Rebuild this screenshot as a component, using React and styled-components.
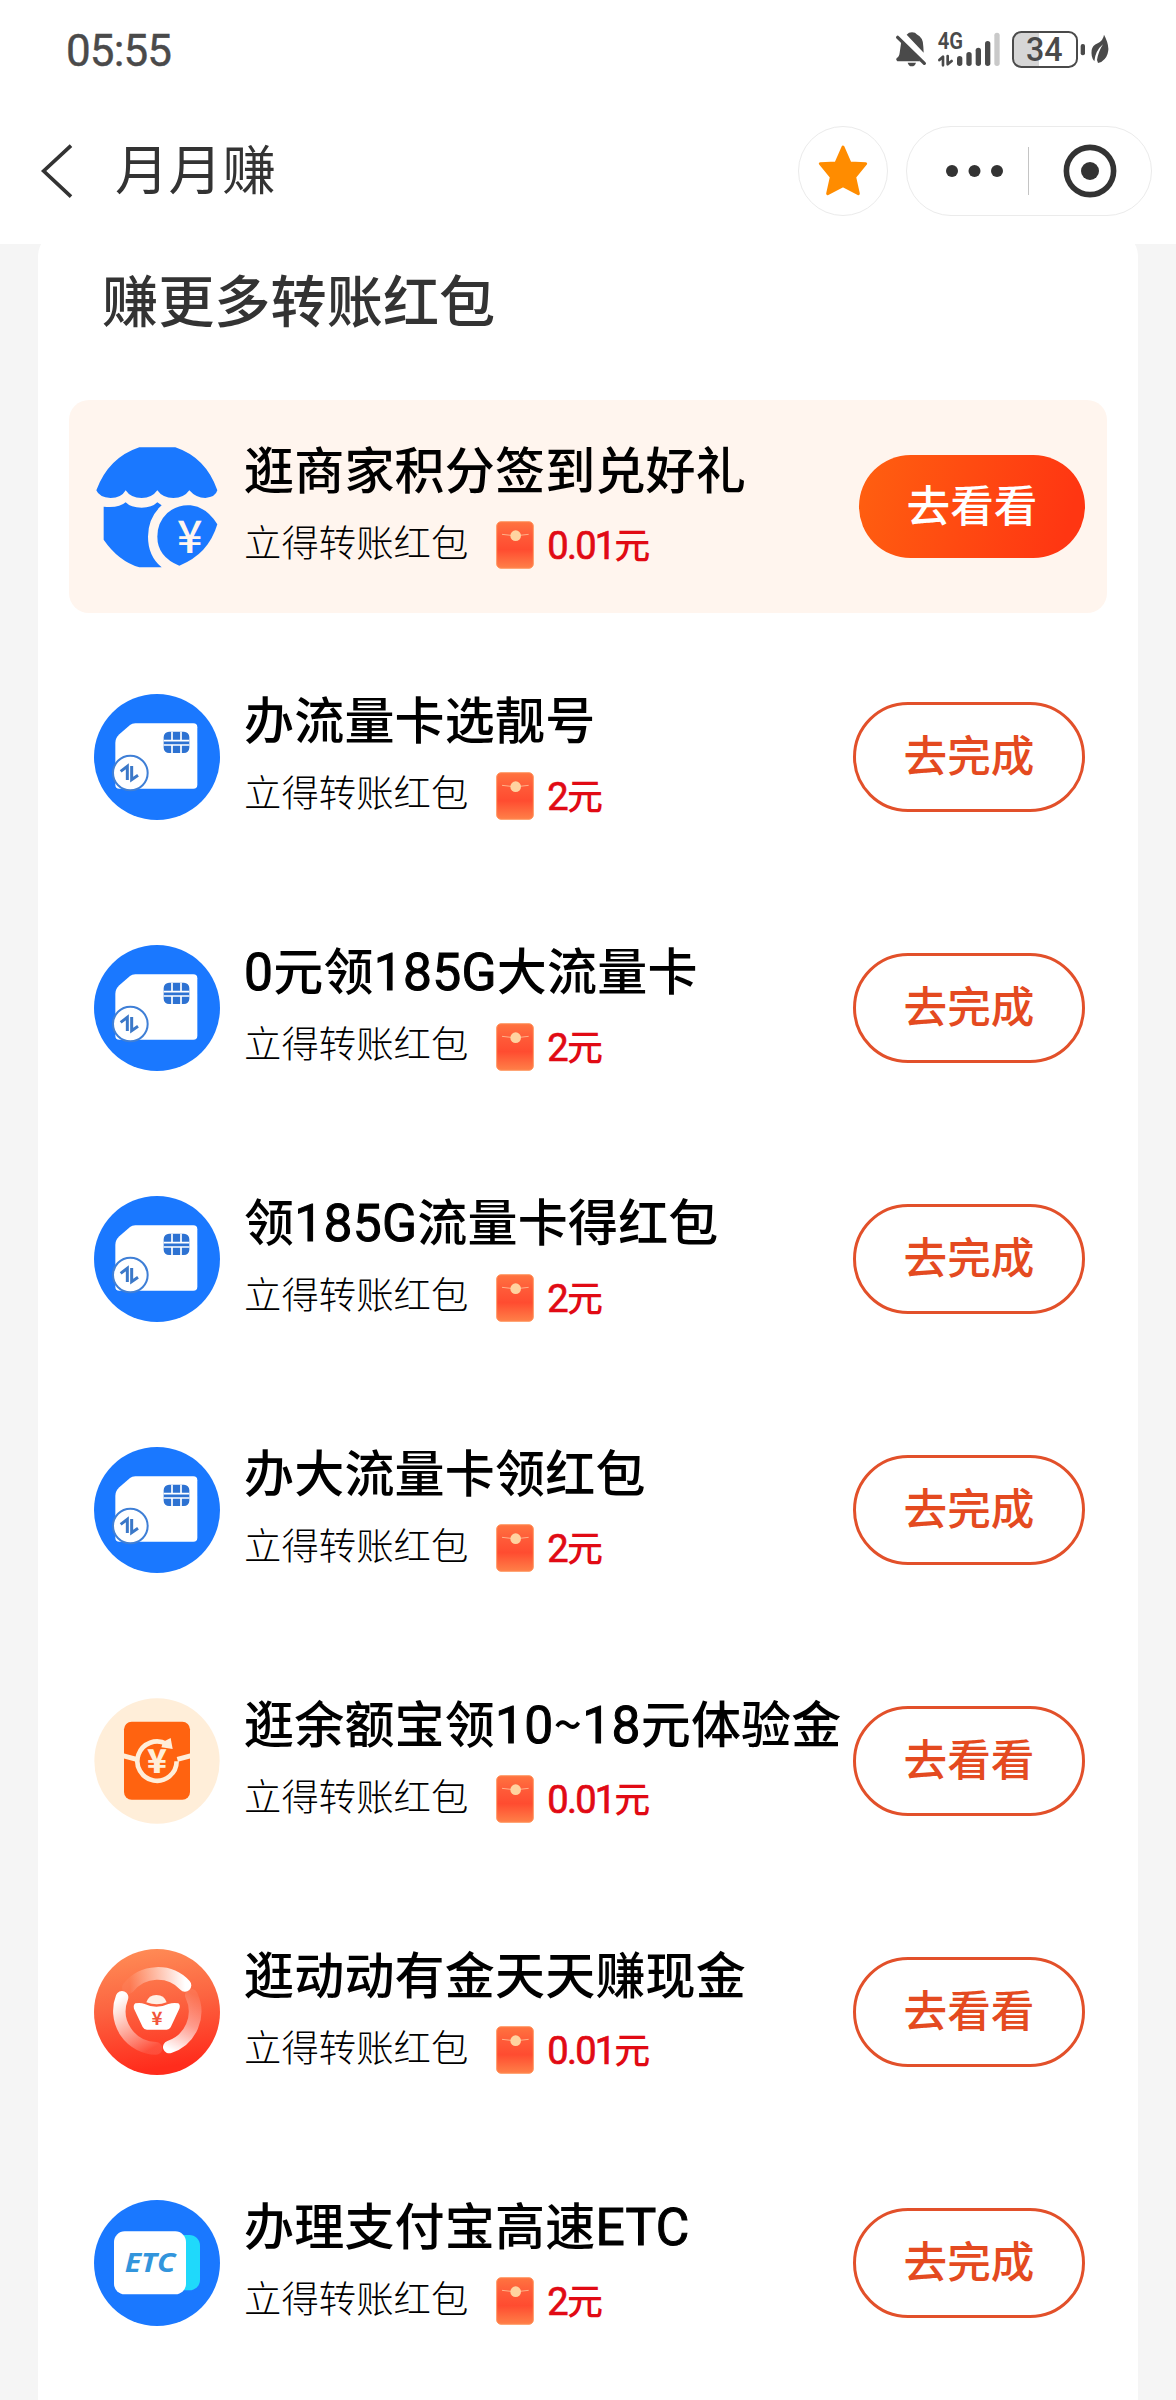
import React from 'react';
import styled, { createGlobalStyle, css } from 'styled-components';

const GlobalStyle = createGlobalStyle`
  * {
    box-sizing: border-box;
  }

  body {
    margin: 0;
    background: #f5f5f5;
    font-family: 'Noto Sans CJK SC', 'Noto Sans', sans-serif;
  }
`;

const Screen = styled.div`
  display: flex;
  flex-direction: column;
  width: 1176px;
  height: 2400px;
  overflow: hidden;
  background: #f5f5f5;
`;

const Header = styled.header`
  flex: none;
  height: 244px;
  background: #fff;
`;

const StatusBar = styled.div`
  display: flex;
  align-items: center;
  justify-content: space-between;
  height: 100px;
  padding: 0 66px;
`;

const Clock = styled.span`
  padding-top: 2px;
  color: #4a4a4a;
  font-family: Roboto, 'Liberation Sans', sans-serif;
  font-size: 44px;
  letter-spacing: -0.9px;
  -webkit-text-stroke: 0.4px currentColor;
`;

const StatusIcons = styled.div`
  display: flex;
  align-items: center;
  gap: 10px;

  svg {
    display: block;
    overflow: visible;
  }

  svg:last-child {
    margin-left: -6px;
  }
`;

const NavBar = styled.nav`
  display: flex;
  align-items: center;
  height: 142px;
  padding: 0 24px 0 38px;

  svg {
    display: block;
  }
`;

const NavTitle = styled.h1`
  flex: 1;
  margin: 0 0 8px 41px;
  color: #333;
  font-size: 53.6px;
  font-weight: 400;
  line-height: 60px;
`;

const StarButton = styled.div`
  display: flex;
  align-items: center;
  justify-content: center;
  width: 90px;
  height: 90px;
  margin-right: 18px;
  border: 1px solid #ebebeb;
  border-radius: 50%;
`;

const Capsule = styled.div`
  display: flex;
  align-items: center;
  width: 246px;
  height: 90px;
  padding-left: 39px;
  border: 1px solid #ebebeb;
  border-radius: 45px;
`;

const Divider = styled.span`
  width: 1px;
  height: 48px;
  margin: 0 34px 0 25px;
  background: #c4c4c4;
`;

const Scroller = styled.main`
  flex: 1;
  overflow: hidden;
`;

const Card = styled.section`
  height: 2240px;
  margin: -12px 38px 0;
  padding: 36px 31px 0;
  border-radius: 24px;
  background: #fff;
`;

const CardTitle = styled.h2`
  margin: 0 0 72px 33px;
  color: #333;
  font-size: 56.2px;
  font-weight: 500;
  line-height: 60px;
`;

const TaskList = styled.div`
  display: flex;
  flex-direction: column;
  gap: 37.86px;
`;

const TaskRow = styled.article`
  display: flex;
  align-items: center;
  height: 213px;
  padding: 0 22px 0 25px;
  border-radius: 20px;
  background: ${(props) => (props.$highlight ? '#fff5ee' : 'transparent')};

  > svg {
    flex: none;
  }
`;

const TaskText = styled.div`
  flex: 1;
  min-width: 0;
  margin: 0 0 8px 24px;
`;

const TaskTitle = styled.h3`
  height: 72px;
  margin: 0;
  color: #000;
  font-size: 50px;
  font-weight: 500;
  line-height: 72px;
  letter-spacing: 0.2px;
  white-space: nowrap;
`;

const Latin = styled.span`
  font-family: Roboto, 'Liberation Sans', sans-serif;
  font-size: 51.5px;
  font-weight: 400;
  letter-spacing: 0.3px;
  -webkit-text-stroke: 1px currentColor;
`;

const Reward = styled.div`
  display: flex;
  align-items: center;
  height: 72px;

  svg {
    margin: 13px 13px 0 28px;
  }
`;

const RewardLabel = styled.span`
  margin-top: 4px;
  color: #000;
  font-size: 37.4px;
  font-weight: 300;
  line-height: 50px;
`;

const Amount = styled.span`
  margin-top: 12px;
  color: #e10a14;
  font-size: 36px;
  font-weight: 500;
  line-height: 50px;
`;

const Digits = styled.span`
  font-family: Roboto, 'Liberation Sans', sans-serif;
  font-size: 38px;
  font-weight: 400;
  letter-spacing: -1.8px;
  -webkit-text-stroke: 0.7px currentColor;
`;

const ActionButton = styled.button`
  flex: none;
  padding: 0 0 8px;
  border-radius: 55px;
  font-family: inherit;
  font-size: 43.6px;
  font-weight: 500;
  line-height: 60px;

  ${(props) =>
    props.$filled
      ? css`
          width: 226px;
          height: 103px;
          border: 0;
          background: linear-gradient(105deg, #ff6010 0%, #ff3612 90%);
          color: #fff;
        `
      : css`
          width: 232px;
          height: 110px;
          border: 3px solid #e2502a;
          background: #fff;
          color: #e44a20;
        `}
`;

const MutedBellIcon = () => (
  <svg width="32" height="40" viewBox="345 90 96 120" fill="#4a4a4a">
    <path d="M380 104 Q386 97 396 97 Q407 97 410 103 Q430 112 430 140 L431 158 Z" />
    <path d="M364 124 L412 172 L420 184 L352 184 Q346 180 350 174 Q358 170 359 158 Z" />
    <path d="M383 188 H408 Q405 199 395 199 Q386 199 383 188 Z" />
    <path d="M353 112 L433 190" stroke="#4a4a4a" strokeWidth="10" strokeLinecap="round" />
  </svg>
);

const SignalIcon = () => (
  <svg width="64" height="40" viewBox="471 90 192 120" fill="#4a4a4a">
    <text
      x="473"
      y="147"
      fontFamily="Roboto, sans-serif"
      fontSize="69"
      fontWeight="600"
      textLength="76"
      lengthAdjust="spacingAndGlyphs"
    >
      4G
    </text>
    <path
      d="M478 180 L489 170 V196 M503 168 V193 L515 183"
      fill="none"
      stroke="#4a4a4a"
      strokeWidth="8"
      strokeLinecap="round"
      strokeLinejoin="round"
    />
    <rect x="531" y="168" width="16" height="30" rx="8" />
    <rect x="559" y="156" width="16" height="42" rx="8" />
    <rect x="587" y="143" width="16" height="55" rx="8" />
    <rect x="615" y="123" width="16" height="75" rx="8" />
    <rect x="643" y="98" width="16" height="100" rx="8" fill="#c9c9c9" />
  </svg>
);

const BatteryIcon = () => (
  <svg width="75" height="40" viewBox="693 90 225 120">
    <path d="M777 98 V200 H724 Q700 200 700 176 V122 Q700 98 724 98 Z" fill="#d6d6d6" />
    <rect x="699" y="96" width="192" height="105" rx="25" fill="none" stroke="#4a4a4a" strokeWidth="6" />
    <rect x="902" y="132" width="13" height="34" rx="6" fill="#4a4a4a" />
    <text
      x="738"
      y="183"
      fill="#4a4a4a"
      fontFamily="Roboto, sans-serif"
      fontSize="98"
      fontWeight="500"
      textLength="110"
      lengthAdjust="spacingAndGlyphs"
    >
      34
    </text>
  </svg>
);

const LeafIcon = () => (
  <svg width="20" height="40" viewBox="930 90 60 120">
    <path d="M972 104 Q997 150 974 177 Q966 187 954 189 L951 180 Q955 155 969 133 Q946 152 943 184 Q932 172 935 150 Q937 137 953 130 Q970 121 972 104 Z" fill="#4a4a4a" />
  </svg>
);

const BackIcon = () => (
  <svg width="36" height="56" viewBox="114 429 108 168">
    <path d="M213 437 L131 513 L213 590" fill="none" stroke="#333" strokeWidth="11" />
  </svg>
);

const StarIcon = () => (
  <svg width="52" height="54" viewBox="111 432 156 162">
    <path
      d="M189 441 L210 489 L257 491 L224 531 L235 581 L189 557 L143 581 L154 531 L121 491 L168 489 Z"
      fill="#ff8c00"
      stroke="#ff8c00"
      strokeWidth="9"
      strokeLinejoin="round"
    />
  </svg>
);

const MoreIcon = () => (
  <svg width="57" height="12" viewBox="0 0 57 12" fill="#333">
    <circle cx="6" cy="6" r="6" />
    <circle cx="28.5" cy="6" r="6" />
    <circle cx="51" cy="6" r="6" />
  </svg>
);

const TargetIcon = () => (
  <svg width="54" height="54" viewBox="0 0 54 54">
    <circle cx="27" cy="27" r="23.6" fill="none" stroke="#333" strokeWidth="5.6" />
    <circle cx="27" cy="27" r="9" fill="#333" />
  </svg>
);

const ShopIcon = () => (
  <svg width="126" height="126" viewBox="102 159 378 378">
    <path
      d="M238 169 H346 Q438 200 472 298 Q467 318 436 321 Q408 321 388 298 Q372 321 340 321 Q308 321 292 298 Q276 321 245 321 Q212 321 197 298 Q184 321 152 321 Q117 319 109 298 Q145 200 238 169 Z"
      fill="#1a78ff"
    />
    <path
      d="M131 347 Q177 352 197 334 Q212 350 245 350 Q276 350 292 334 L305 343 Q264 380 264 437 Q264 495 305 529 H238 Q175 510 131 446 Z"
      fill="#1a78ff"
    />
    <path
      d="M472 400 Q445 490 358 524 Q292 497 292 437 Q292 394 322 366 Q352 340 392 343 Q440 348 472 400 Z"
      fill="#1a78ff"
    />
    <text
      x="389"
      y="486"
      fill="#fff5ee"
      fontFamily="Noto Sans CJK SC, sans-serif"
      fontSize="134"
      fontWeight="500"
      textAnchor="middle"
    >
      ¥
    </text>
  </svg>
);

const SimCardIcon = () => (
  <svg width="126" height="126" viewBox="42 42 378 378">
    <circle cx="231" cy="231" r="189" fill="#1a78ff" />
    <path
      d="M166 130 H340 Q352 130 352 142 V314 Q352 326 340 326 H118 Q106 326 106 314 V188 Q106 174 118 163 L150 135 Q156 130 166 130 Z"
      fill="#fff"
    />
    <rect x="251" y="155" width="77" height="64" rx="16" fill="#2d72d2" />
    <path d="M251 182 H328 M251 195 H328 M276 155 V182 M303 155 V182 M276 195 V219 M303 195 V219" stroke="#fff" strokeWidth="5" />
    <circle cx="151" cy="279" r="52" fill="#fff" stroke="#3f7fd6" strokeWidth="6" />
    <path d="M122 274 L142 259 V300 M155 258 V299 L174 286" fill="none" stroke="#3b78c8" strokeWidth="9" />
  </svg>
);

const YuebaoIcon = () => (
  <svg width="126" height="126" viewBox="42 53 378 378">
    <circle cx="231" cy="242" r="188" fill="#ffeed9" />
    <rect x="132" y="124" width="198" height="234" rx="23" fill="#ff6310" />
    <path
      d="M128 226 L170 237 M292 237 L334 226"
      fill="none"
      stroke="#ffeed9"
      strokeWidth="15"
    />
    <path
      d="M260 191 A59 59 0 1 0 290 243"
      fill="none"
      stroke="#ffeed9"
      strokeWidth="14"
    />
    <path d="M250 184 L272 173 L278 206 L244 201 Z" fill="#ffeed9" />
    <text
      x="231"
      y="279"
      fill="#ffeed9"
      fontFamily="Noto Sans CJK SC, sans-serif"
      fontSize="98"
      fontWeight="900"
      textAnchor="middle"
    >
      ¥
    </text>
  </svg>
);

const IngotIcon = () => (
  <svg width="126" height="126" viewBox="42 56 378 378">
    <defs>
      <linearGradient id="ingotBg" x1="0" y1="0" x2="0.15" y2="1">
        <stop offset="0" stopColor="#ff9058" />
        <stop offset="0.5" stopColor="#fc6340" />
        <stop offset="1" stopColor="#ff2c1c" />
      </linearGradient>
      <linearGradient id="arcTop" gradientUnits="userSpaceOnUse" x1="150" y1="170" x2="315" y2="165">
        <stop offset="0" stopColor="#fff" stopOpacity="0.05" />
        <stop offset="1" stopColor="#fff" />
      </linearGradient>
      <linearGradient id="arcRight" gradientUnits="userSpaceOnUse" x1="340" y1="190" x2="265" y2="355">
        <stop offset="0" stopColor="#fff" stopOpacity="0.08" />
        <stop offset="0.5" stopColor="#fff" stopOpacity="0.45" />
        <stop offset="1" stopColor="#fff" />
      </linearGradient>
      <linearGradient id="arcLeft" gradientUnits="userSpaceOnUse" x1="120" y1="200" x2="215" y2="355">
        <stop offset="0" stopColor="#fff" />
        <stop offset="1" stopColor="#fff" stopOpacity="0.1" />
      </linearGradient>
    </defs>
    <circle cx="231" cy="245" r="189" fill="url(#ingotBg)" />
    <g fill="none" strokeWidth="38" strokeLinecap="round">
      <path d="M145 172 A112 112 0 0 1 315 165" stroke="url(#arcTop)" />
      <path d="M334 195 A112 112 0 0 1 268 350" stroke="url(#arcRight)" />
      <path d="M126 201 A112 112 0 0 0 228 354" stroke="url(#arcLeft)" />
    </g>
    <path d="M199 216 Q206 194 229 194 Q253 194 260 216 Q231 228 199 216 Z" fill="#fff0e6" />
    <path d="M166 219 Q182 216 194 221 Q229 238 265 221 Q280 216 295 219 Q302 225 298 235 L272 291 Q268 298 260 298 H201 Q192 298 188 290 L162 235 Q159 224 166 219 Z" fill="#fff" />
    <text
      x="231"
      y="284"
      fill="#f2553a"
      fontFamily="Noto Sans CJK SC, sans-serif"
      fontSize="56"
      fontWeight="700"
      textAnchor="middle"
    >
      ¥
    </text>
  </svg>
);

const EtcIcon = () => (
  <svg width="126" height="126" viewBox="42 59 378 378">
    <circle cx="231" cy="248" r="189" fill="#1a78ff" />
    <rect x="250" y="164" width="110" height="166" rx="32" fill="#1fd9fb" />
    <rect x="102" y="153" width="216" height="189" rx="32" fill="#fff" />
    <text
      x="134"
      y="276"
      fill="#3295dc"
      fontFamily="Open Sans, sans-serif"
      fontSize="78"
      fontStyle="italic"
      fontWeight="700"
      textLength="153"
      lengthAdjust="spacingAndGlyphs"
    >
      ETC
    </text>
  </svg>
);

const EnvelopeIcon = () => (
  <svg width="38" height="48" viewBox="168 393 114 144">
    <defs>
      <linearGradient id="envelope" x1="0" y1="0" x2="0" y2="1">
        <stop offset="0" stopColor="#ff7440" />
        <stop offset="0.32" stopColor="#ff5a38" />
        <stop offset="0.6" stopColor="#ff4c30" />
        <stop offset="1" stopColor="#ff8048" />
      </linearGradient>
    </defs>
    <rect x="170" y="395" width="110" height="140" rx="13" fill="url(#envelope)" stroke="#ff9a66" strokeWidth="3" />
    <path d="M186 433 Q225 442 266 433" fill="none" stroke="#ffb088" strokeWidth="3" />
    <circle cx="227" cy="437" r="16" fill="#ffd3a0" />
  </svg>
);

const tasks = [
  { icon: ShopIcon, title: '逛商家积分签到兑好礼', amount: '0.01', action: '去看看', highlight: true },
  { icon: SimCardIcon, title: '办流量卡选靓号', amount: '2', action: '去完成' },
  { icon: SimCardIcon, title: '0元领185G大流量卡', amount: '2', action: '去完成' },
  { icon: SimCardIcon, title: '领185G流量卡得红包', amount: '2', action: '去完成' },
  { icon: SimCardIcon, title: '办大流量卡领红包', amount: '2', action: '去完成' },
  { icon: YuebaoIcon, title: '逛余额宝领10~18元体验金', amount: '0.01', action: '去看看' },
  { icon: IngotIcon, title: '逛动动有金天天赚现金', amount: '0.01', action: '去看看' },
  { icon: EtcIcon, title: '办理支付宝高速ETC', amount: '2', action: '去完成' },
];

// digits and latin letters use their own face next to the hanzi
const renderTitle = (title) =>
  title
    .split(/(\w+)/)
    .filter(Boolean)
    .map((part) => (/^\w+$/.test(part) ? <Latin key={part}>{part}</Latin> : part));

const Task = ({ icon: Icon, title, amount, action, highlight = false }) => (
  <TaskRow $highlight={highlight}>
    <Icon />
    <TaskText>
      <TaskTitle>{renderTitle(title)}</TaskTitle>
      <Reward>
        <RewardLabel>立得转账红包</RewardLabel>
        <EnvelopeIcon />
        <Amount>
          <Digits>{amount}</Digits>元
        </Amount>
      </Reward>
    </TaskText>
    <ActionButton $filled={highlight}>{action}</ActionButton>
  </TaskRow>
);

const App = () => (
  <>
    <GlobalStyle />
    <Screen>
      <Header>
        <StatusBar>
          <Clock>05:55</Clock>
          <StatusIcons>
            <MutedBellIcon />
            <SignalIcon />
            <BatteryIcon />
            <LeafIcon />
          </StatusIcons>
        </StatusBar>
        <NavBar>
          <BackIcon />
          <NavTitle>月月赚</NavTitle>
          <StarButton>
            <StarIcon />
          </StarButton>
          <Capsule>
            <MoreIcon />
            <Divider />
            <TargetIcon />
          </Capsule>
        </NavBar>
      </Header>
      <Scroller>
        <Card>
          <CardTitle>赚更多转账红包</CardTitle>
          <TaskList>
            {tasks.map((task) => (
              <Task key={task.title} {...task} />
            ))}
          </TaskList>
        </Card>
      </Scroller>
    </Screen>
  </>
);

export default App;
